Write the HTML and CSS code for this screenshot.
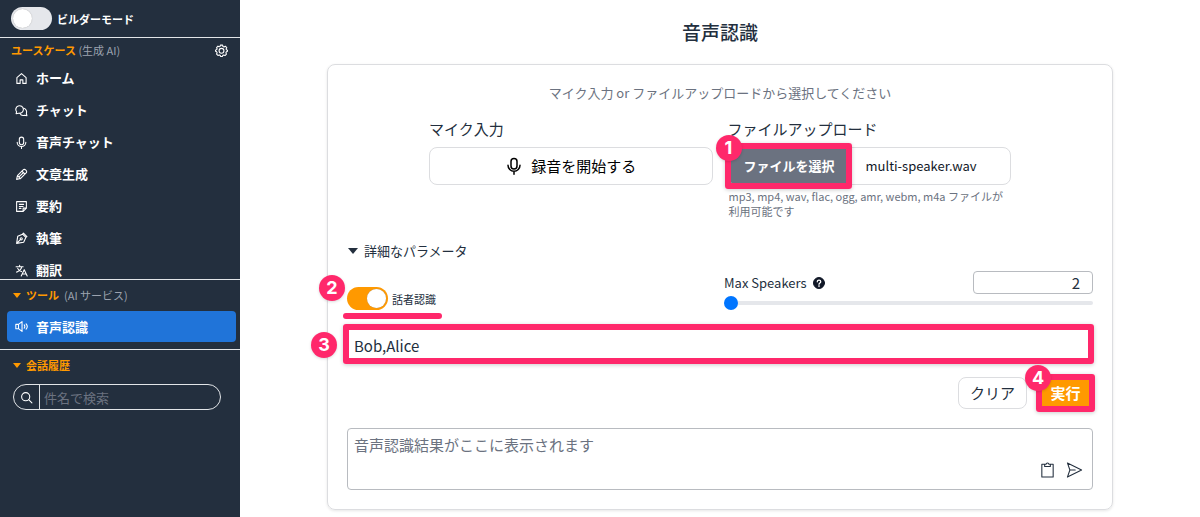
FILE: index.html
```html
<!DOCTYPE html>
<html lang="ja">
<head>
<meta charset="utf-8">
<meta name="viewport" content="width=device-width, initial-scale=1">
<title>音声認識</title>
<link rel="stylesheet" href="styles.css">
</head>
<body>
<div class="app">
  <aside class="sidebar">
    <label class="builder">
      <input type="checkbox" role="switch" class="switch">
      <span>ビルダーモード</span>
    </label>
    <section class="usecases">
      <div class="section-head">
        <h2 class="section-title">ユースケース <small>(生成 AI)</small></h2>
        <button class="icon-button" type="button" aria-label="設定">
          <svg class="gear" viewBox="0 0 24 24"><path d="M10 2h4l.7 2.6 2 .8L19 4.100l2.700 2.800-1.300 2.300.8 1.500L23 11.500v2l-2.300 1.200-.6 1.600 1 2.400-2.600 2.600-2.400-1-1.700.7L13.500 23h-3l-1-2.200-1.600-.7-2.400 1-2.600-2.600 1-2.400-.7-1.600L1 13.500v-2l2.200-1.200.7-1.500-1-2.300L5.500 4l2 1.200 1.800-.7z"/><circle cx="12" cy="12.500" r="4.500"/></svg>
        </button>
      </div>
      <nav class="menu">
        <a class="item" href="#"><svg viewBox="0 0 24 24"><path d="M3.500 21V10.500L12 3l8.500 7.500V21h-6v-6.500h-5V21z"/></svg>ホーム</a>
        <a class="item" href="#"><svg viewBox="0 0 24 24"><path d="M3 14.500A7 7 0 1 1 7 17l-5 1z"/><path d="M16 8a7 7 0 0 1 5 9.500l1 4-4.500-.8A7 7 0 0 1 9 17"/></svg>チャット</a>
        <a class="item" href="#"><svg viewBox="0 0 24 24"><rect x="8" y="2" width="8" height="14" rx="4"/><path d="M4 11.500a8 8 0 0 0 16 0M12 20v3"/></svg>音声チャット</a>
        <a class="item" href="#"><svg viewBox="0 0 24 24"><path d="M3 21l1.500-7L15 3.500a3 3 0 0 1 4.500 0l1 1a3 3 0 0 1 0 4.500L10 19.500zM13 6l5 5M4.500 14l5.500 5.500M7.500 16.500l8-8"/></svg>文章生成</a>
        <a class="item" href="#"><svg viewBox="0 0 24 24"><path d="M3 3h18v12l-6 6H3zM21 15h-6v6M8 8h8M8 12h7M8 15.500h3"/></svg>要約</a>
        <a class="item" href="#"><svg viewBox="0 0 24 24"><path d="M3 21l2-13 9-4 6 6-4 9zM14 4l1.500-2L22 8.500 20 10M3 21l7-7"/><circle cx="11.500" cy="12.500" r="2"/></svg>執筆</a>
        <a class="item" href="#"><svg viewBox="0 0 24 24"><path d="M2 5h13M8.500 2.500V5M12.500 5c-1 5-4 8-9.500 10M5 8c1 3 4 5 7 6M11.500 22L17 10.500 22.500 22M13.500 18.500h7"/></svg>翻訳</a>
      </nav>
    </section>
    <details class="tools" open>
      <summary class="section-title">ツール <small>(AI サービス)</small></summary>
      <a class="item item-active" href="#" aria-current="page"><svg viewBox="0 0 24 24"><path d="M1.500 8h5L13 3v18l-6.500-5h-5zM6.500 8v8M17 9c1.500 2 1.500 4 0 6M20.500 7c3 3.500 3 6.500 0 10"/></svg>音声認識</a>
    </details>
    <details class="history" open>
      <summary class="section-title">会話履歴</summary>
      <label class="search">
        <svg viewBox="0 0 24 24"><circle cx="10.500" cy="10.500" r="7.500"/><path d="M16 16l6 6"/></svg>
        <input type="search" placeholder="件名で検索" aria-label="件名で検索">
      </label>
    </details>
  </aside>

  <main class="main">
    <h1 class="title">音声認識</h1>
    <div class="card">
      <p class="lead">マイク入力 or ファイルアップロードから選択してください</p>
      <div class="sources">
        <div class="source">
          <h2 class="source-title">マイク入力</h2>
          <button class="button record" type="button"><svg viewBox="0 0 24 24"><rect x="8" y="2" width="8" height="14" rx="4"/><path d="M4 11a8 8 0 0 0 16 0M12 19v4"/></svg>録音を開始する</button>
        </div>
        <div class="source">
          <h2 class="source-title">ファイルアップロード</h2>
          <div class="upload">
            <div class="marked">
              <button class="choose" type="button">ファイルを選択</button>
              <span class="frame frame-choose"></span><span class="badge badge-corner">1</span>
            </div>
            <span class="file-name">multi-speaker.wav</span>
          </div>
          <p class="hint">mp3, mp4, wav, flac, ogg, amr, webm, m4a ファイルが利用可能です</p>
        </div>
      </div>

      <details class="params" open>
        <summary>詳細なパラメータ</summary>
        <div class="param-grid">
          <div class="marked diarize">
            <label class="diarize-label"><input type="checkbox" role="switch" class="switch" checked><span>話者認識</span></label>
            <span class="underline"></span><span class="badge badge-switch">2</span>
          </div>
          <div class="speakers">
            <div class="speakers-head">
              <label for="max">Max Speakers</label>
              <svg class="help" viewBox="0 0 24 24"><circle cx="12" cy="12" r="11" fill="currentColor"/><path d="M8.500 9.500c0-4.500 7-4.500 7 0 0 2.500-3.500 2.500-3.500 5M12 17v2" fill="none" stroke="#fff" stroke-width="2.500"/></svg>
              <input class="number" id="max" type="text" inputmode="numeric" value="2">
            </div>
            <input class="range" type="range" min="2" max="10" value="2" aria-label="Max Speakers">
          </div>
        </div>
        <div class="marked">
          <input class="names" type="text" value="Bob,Alice" aria-label="話者名">
          <span class="frame frame-names"></span><span class="badge badge-names">3</span>
        </div>
      </details>

      <div class="actions">
        <button class="button clear" type="button">クリア</button>
        <div class="marked">
          <button class="run" type="button">実行</button>
          <span class="frame frame-run"></span><span class="badge badge-corner">4</span>
        </div>
      </div>

      <div class="result">
        <textarea rows="1" placeholder="音声認識結果がここに表示されます" aria-label="音声認識結果"></textarea>
        <div class="result-tools">
          <button class="icon-button" type="button" aria-label="コピー"><svg viewBox="0 0 24 24"><path d="M8 4H4v18h16V4h-4M8 7V4h2a2 2 0 0 1 4 0h2v3z"/></svg></button>
          <button class="icon-button" type="button" aria-label="送信"><svg viewBox="0 0 24 24"><path d="M2 2l20 10L2 22l3.500-10zM5.500 12H13"/></svg></button>
        </div>
      </div>
    </div>
  </main>
</div>
</body>
</html>
```
FILE: styles.css
```css
:root {
  --navy: #232f3e;
  --orange: #ff9900;
  --pink: #ff286b;
  --line: #dcdde0;
  --muted: #6b7280;
}
* { box-sizing: border-box; }
body {
  margin: 0;
  color: var(--navy);
  background: #fff;
  font: 13px/20px "Noto Sans CJK JP", sans-serif;
}
h1, h2, p { margin: 0; font-weight: 400; }
button, input, textarea { font: inherit; color: inherit; }
button { cursor: pointer; }
svg { fill: none; stroke: currentColor; stroke-width: 2; stroke-linejoin: round; stroke-linecap: round; flex: none; }
.app { display: flex; height: 100vh; overflow: hidden; }

.sidebar { display: flex; flex-direction: column; flex: 0 0 240px; color: #fff; background: var(--navy); }
.builder { display: flex; align-items: center; gap: 5px; padding: 7px 11px; font-size: 11px; font-weight: 700; }
.switch {
  appearance: none;
  display: flex;
  width: 41px;
  height: 23px;
  margin: 0;
  padding: 2px;
  border-radius: 12px;
  background: #e5e7eb;
}
.switch::before { content: ""; width: 19px; height: 19px; border-radius: 50%; background: #fff; box-shadow: 0 0 1px #999; }
.switch:checked { justify-content: flex-end; background: var(--orange); }
.usecases, .tools, .history { border-top: 1px solid #e2e5e8; }
.usecases { flex: 1 1 0; min-height: 0; overflow-y: auto; scrollbar-width: none; }
.history { flex: 0 0 168px; }
.section-head { display: flex; align-items: center; justify-content: space-between; padding: 2px 12px 2px 11px; }
.section-title { color: var(--orange); font-size: 11px; font-weight: 700; }
.section-title small { color: #9ca3af; font-size: 11px; font-weight: 400; }
.icon-button { display: flex; padding: 0; border: 0; background: none; }
.gear { width: 13px; height: 13px; }
.item { display: flex; align-items: center; gap: 8px; height: 32px; padding: 0 15px; color: #fff; font-weight: 700; text-decoration: none; }
.item svg { width: 13px; height: 13px; }
summary { display: flex; align-items: center; gap: 5px; list-style: none; cursor: pointer; }
summary::before { content: ""; border: 4px solid transparent; border-top: 5px solid currentColor; border-bottom: 0; }
.tools { padding: 5px 4px 7px 7px; }
.tools summary { padding: 0 6px 6px; }
.item-active { height: 31px; padding: 0 8px; border-radius: 4px; background: #2074d9; }
.history { padding: 5px 19px 0 13px; }
.history summary { padding-bottom: 9px; }
.search { display: flex; align-items: center; height: 26px; border: 1px solid #e2e5e8; border-radius: 13px; overflow: hidden; }
.search svg { width: 13px; height: 13px; margin: 0 6px; }
.search input { flex: 1; min-width: 0; height: 100%; padding: 0 4px; border: 0; border-left: 1px solid #e2e5e8; background: none; outline: 0; }
.search input::placeholder { color: var(--muted); }

.main { flex: 1; min-width: 0; padding: 0 87px 7px; }
.title { padding: 18px 0; font-size: 19px; line-height: 28px; font-weight: 500; text-align: center; }
.card { padding: 18px 19px 19px; border: 1px solid var(--line); border-radius: 8px; box-shadow: 0 1px 3px #0000001a; }
.lead { color: var(--muted); text-align: center; }
.sources { display: grid; grid-template-columns: 1fr 1fr; gap: 15px; max-width: 582px; margin: 16px auto 22px; }
.source-title { margin-bottom: 8px; font-size: 15px; line-height: 20px; }
.button { border: 1px solid var(--line); border-radius: 8px; background: #fff; font-size: 15px; }
.record { display: flex; align-items: center; justify-content: center; gap: 8px; width: 100%; height: 38px; color: #000; padding: 0; }
.record svg { width: 18px; height: 18px; }
.upload { display: flex; align-items: center; height: 38px; border: 1px solid var(--line); border-radius: 8px; }
.choose { height: 38px; padding: 0 15px; border: 0; border-radius: 8px 0 0 8px; color: #fff; background: var(--muted); font-weight: 700; }
.file-name { margin-left: 16px; color: #111827; font-size: 13px; }
.hint { margin-top: 4px; padding-left: 1px; color: var(--muted); font-size: 11px; line-height: 15px; }

.marked { position: relative; }
.frame, .underline, .badge { position: absolute; pointer-events: none; }
.frame { border: 6px solid var(--pink); border-radius: 3px; box-shadow: 0 1px 4px #00000033; }
.frame-choose { inset: -4px -2px -4px -4px; }
.frame-names { inset: -4px -1px -4px -4px; }
.frame-run { inset: -3px -2px; }
.underline { left: -4px; bottom: -9px; width: 99px; height: 6px; border-radius: 3px; background: var(--pink); }
.badge {
  width: 26px;
  height: 26px;
  border-radius: 50%;
  color: #fff;
  background: var(--pink);
  box-shadow: 0 1px 3px #00000026;
  font: 700 18px/26px Inter, sans-serif;
  text-align: center;
}
.badge-corner { top: -12px; left: -13px; }
.badge-switch { top: 2px; left: -28px; }
.badge-names { top: 4px; left: -36px; }

.params summary { padding-left: 1px; }
.params summary::before { margin-right: 1px; border-width: 6px 5px 0; }
.param-grid { display: grid; grid-template-columns: 1fr 1fr; gap: 8px; margin: 10px 0 16px; align-items: center; }
.diarize { display: flex; padding-top: 14px; }
.diarize-label { display: flex; align-items: center; gap: 4px; font-size: 11px; }
.speakers-head { display: flex; align-items: center; gap: 6px; }
.help { width: 12px; height: 12px; color: #111827; }
.number { width: 120px; height: 23px; margin-left: auto; padding: 0 12px; border: 1px solid #b8bbc0; border-radius: 4px; font-size: 15px; text-align: right; }
.range { appearance: none; display: block; width: 100%; height: 4px; margin: 7px 0; border-radius: 2px; background: #e5e7eb; }
.range::-webkit-slider-thumb { appearance: none; width: 14px; height: 14px; border-radius: 50%; background: #0075ff; }
.names { display: block; width: 100%; height: 32px; padding: 2px 6px 0; border: 1px solid #b8bbc0; border-radius: 4px; font-size: 15px; }
.actions { display: flex; justify-content: flex-end; gap: 11px; margin: 17px 0 19px; }
.clear { height: 32px; padding: 0 11px; }
.run { width: 55px; height: 32px; padding: 0; border: 0; border-radius: 8px; color: #fff; background: var(--orange); font-size: 15px; font-weight: 700; }
.result { padding: 4px 9px 10px 6px; border: 1px solid #b8bbc0; border-radius: 4px; }
.result textarea { display: block; width: 100%; height: 24px; padding: 0; border: 0; outline: 0; resize: none; font-size: 15px; line-height: 24px; }
.result textarea::placeholder { color: var(--muted); }
.result-tools { display: flex; justify-content: flex-end; gap: 10px; padding-top: 4px; }
.result-tools svg { width: 17px; height: 18px; stroke-width: 1.5; }
```
